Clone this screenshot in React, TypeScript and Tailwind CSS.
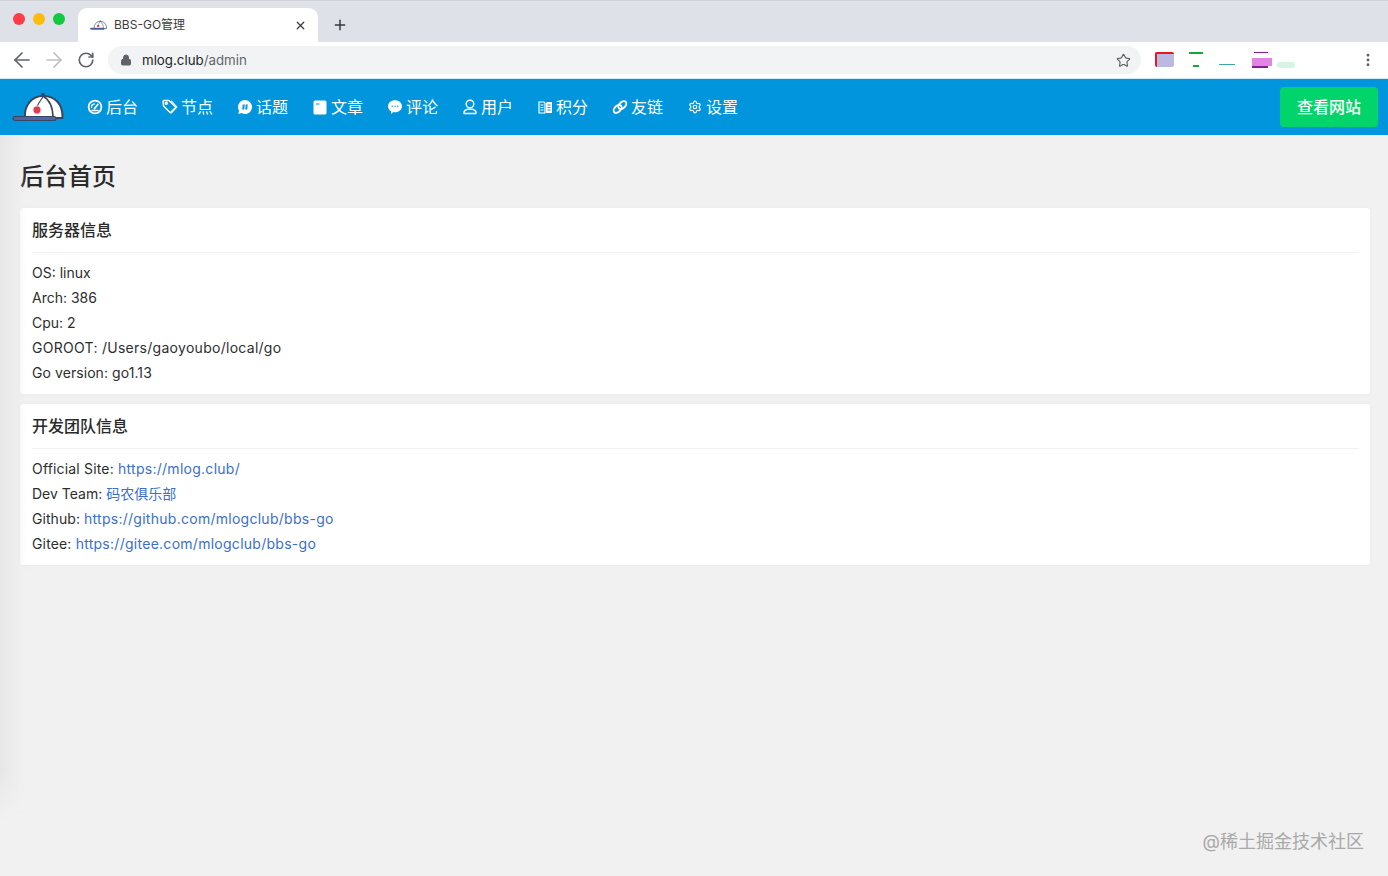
import React from "react";
import { ArrowLeft, ArrowRight, RotateCw, Lock, Star, X, Plus, EllipsisVertical, Settings } from "lucide-react";

const FONT = "font-['Inter','Noto_Sans_CJK_SC',sans-serif]";

function Cap({ w, h }: { w: number; h: number }) {
  return (
    <svg width={w} height={h} viewBox="0 0 52 30" fill="none">
      <path d="M13 26 C12 13 20 4 31 4 C43 4 51 12 50.500 26 Z" fill="#fff" stroke="#3a4560" strokeWidth="2" strokeLinejoin="round" />
      <path d="M31 4 C38 8 41 17 41 26" stroke="#3a4560" strokeWidth="1.600" />
      <path d="M31 5 C28 9 26 12 25 15" stroke="#3a4560" strokeWidth="1.200" />
      <circle cx="31" cy="3" r="2" fill="#3a4560" />
      <circle cx="25" cy="18" r="4.600" fill="#d9dbe2" />
      <circle cx="25" cy="18" r="3.400" fill="#e0394a" />
      <rect x="1" y="24.500" width="43" height="4" rx="2" fill="#4f63a8" stroke="#3a4560" strokeWidth="1.200" />
    </svg>
  );
}

const sw = { fill: "none", stroke: "#fff", strokeLinecap: "round" as const, strokeLinejoin: "round" as const };

function GaugeIcon() {
  return (
    <svg width="16" height="16" viewBox="0 0 16 16" {...sw} strokeWidth="1.800">
      <circle cx="8" cy="8" r="6.400" />
      <path d="M7.500 9.500L10.800 5.500" />
      <path d="M4.500 8.500a3.500 3.500 0 0 1 3-3.700" strokeWidth="1.300" />
      <path d="M5 11.500h6" strokeWidth="1.300" />
    </svg>
  );
}
function TagIcon() {
  return (
    <svg width="16" height="16" viewBox="0 0 16 16" {...sw} strokeWidth="1.400">
      <path d="M1 2.500L1.500 1.500H7L13.800 8.300L8.300 13.800L1.500 7z" />
      <circle cx="4.300" cy="4.300" r="1" />
      <path d="M9.500 2l5.500 6-5.500 6" strokeWidth="1.100" />
    </svg>
  );
}
function BubbleHash() {
  return (
    <svg width="16" height="16" viewBox="0 0 16 16">
      <path d="M8 1a7 7 0 1 1-3.400 13.100L1.200 15l.9-3.200A7 7 0 0 1 8 1z" fill="#fff" />
      <path d="M7 5l-1 6M10 5l-1 6M5 7h6M4.800 9h6" stroke="#0095dc" strokeWidth="1" />
    </svg>
  );
}
function Doc() {
  return (
    <svg width="14" height="15" viewBox="0 0 14 15">
      <rect x="0.500" y="0.500" width="13" height="14" rx="1.500" fill="#fff" />
      <rect x="3" y="3.500" width="3.500" height="1" fill="#0095dc" />
    </svg>
  );
}
function BubbleDots() {
  return (
    <svg width="16" height="16" viewBox="0 0 16 16">
      <path d="M8 1.200c4 0 7 2.600 7 6s-3 6-7 6c-.6 0-1.200 0-1.700-.2L4 15v-2.800C2 11.100 1 9.300 1 7.200c0-3.400 3-6 7-6z" fill="#fff" />
      <circle cx="5.200" cy="7.200" r=".7" fill="#0095dc" />
      <circle cx="8" cy="7.200" r=".7" fill="#0095dc" />
      <circle cx="10.800" cy="7.200" r=".7" fill="#0095dc" />
    </svg>
  );
}
function UserIcon() {
  return (
    <svg width="16" height="16" viewBox="0 0 16 16" {...sw} strokeWidth="1.400">
      <circle cx="8" cy="5" r="3.800" />
      <path d="M2 14.500c-.3-2.500 1.500-3.800 3.800-4.200h4.400c2.300.4 4.100 1.700 3.800 4.200z" />
    </svg>
  );
}
function BookIcon() {
  return (
    <svg width="15" height="15" viewBox="0 0 15 15">
      <path d="M1 2h5l1 1v10H1z" fill="none" stroke="#fff" strokeWidth="1.200" />
      <path d="M8 3l1-1h5v11H8z" fill="#fff" />
      <path d="M2.500 5h3M2.500 7.500h3M2.500 10h3" stroke="#fff" strokeWidth="1" />
      <path d="M9.500 5h3M9.500 7.500h3M9.500 10h3" stroke="#0095dc" strokeWidth="1" />
    </svg>
  );
}
function LinkIcon() {
  return (
    <svg width="17" height="16" viewBox="0 0 17 16" fill="none" stroke="#fff" strokeWidth="2">
      <ellipse cx="6" cy="10" rx="5" ry="3.200" transform="rotate(-45 6 10)" />
      <ellipse cx="11" cy="6" rx="5" ry="3.200" transform="rotate(-45 11 6)" />
    </svg>
  );
}

const navItems: { label: string; icon: React.ReactNode; cls: string }[] = [
  { label: "后台", icon: <GaugeIcon />, cls: "w-[75px]" },
  { label: "节点", icon: <TagIcon />, cls: "w-[75px]" },
  { label: "话题", icon: <BubbleHash />, cls: "w-[75px]" },
  { label: "文章", icon: <Doc />, cls: "w-[75px]" },
  { label: "评论", icon: <BubbleDots />, cls: "w-[75px]" },
  { label: "用户", icon: <UserIcon />, cls: "w-[75px]" },
  { label: "积分", icon: <BookIcon />, cls: "w-[75px]" },
  { label: "友链", icon: <LinkIcon />, cls: "w-[75px]" },
  { label: "设置", icon: <Settings size={14} color="#fff" strokeWidth={2} />, cls: "w-[76px]" },
];

function Card({ title, children }: { title: string; children: React.ReactNode }) {
  return (
    <section className="bg-white rounded-[3px] px-3 shadow-[0_0_6px_rgba(0,0,0,0.03)]">
      <h2 className="h-[45px] flex items-center text-[16px] font-medium text-[#2a2a2a] border-b border-[#f1f1f1]">{title}</h2>
      <div className="pt-[7px] pb-[9px] text-[14px] leading-[25px] text-[#2e2e2e]">{children}</div>
    </section>
  );
}

function A({ children }: { children: React.ReactNode }) {
  return <a className="text-[#3a6fcb] tracking-[0.270px]">{children}</a>;
}

export default function App() {
  return (
    <div className={`relative h-[876px] w-[1388px] overflow-hidden bg-[#f1f1f1] ${FONT}`}>
      {/* tab strip */}
      <div className="h-[42px] bg-[#dee1e7] border-t border-[#d0d2d6] flex items-end">
        <div className="flex items-center gap-2 pl-[13px] h-[40px] pb-[6px]">
          <span className="w-[12px] h-[12px] rounded-full bg-[#fc3d48]" />
          <span className="w-[12px] h-[12px] rounded-full bg-[#fdbb0a]" />
          <span className="w-[12px] h-[12px] rounded-full bg-[#13c93f]" />
        </div>
        <div className="ml-[13px] w-[240px] h-[34px] bg-white rounded-t-[9px] flex items-center pl-[12px] pr-[11px]">
          <Cap w={17} h={10} />
          <span className="ml-[7px] text-[12px] text-[#3c3c3c]">BBS-GO管理</span>
          <X size={13} strokeWidth={2.200} color="#3a3a3a" className="ml-auto" />
        </div>
        <div className="h-[34px] flex items-center ml-[14px]">
          <Plus size={16} strokeWidth={2.200} color="#37393c" />
        </div>
      </div>
      {/* toolbar */}
      <div className="h-[36px] bg-white flex items-center">
        <div className="flex items-center pl-[10px] gap-[8px]">
          <ArrowLeft size={24} strokeWidth={1.700} color="#5f6368" />
          <ArrowRight size={24} strokeWidth={1.700} color="#bdc0c4" />
          <span className="w-[24px] flex justify-center">
            <RotateCw size={18} strokeWidth={2.200} color="#5f6368" />
          </span>
        </div>
        <div className="ml-[10px] w-[1033px] h-[28px] rounded-full bg-[#f1f3f4] flex items-center pl-[12px] pr-[10px]">
          <Lock size={12} fill="#5f6368" color="#5f6368" />
          <span className="ml-[10px] pt-[2px] text-[13.300px] text-[#24262a]">mlog.club<span className="text-[#62666b]">/admin</span></span>
          <Star size={15} strokeWidth={1.800} color="#5a5e63" className="ml-auto" />
        </div>
        <div className="relative flex-1 h-full">
          <div className="absolute left-[14px] top-[10px] w-[19px] h-[15px] rounded-[2px] bg-[#b9b9e2] border-t-2 border-l-2 border-[#e8171f]" />
          <div className="absolute left-[48px] top-[10px] w-[14px] h-[2px] bg-[#17a83a]" />
          <div className="absolute left-[52px] top-[23px] w-[6px] h-[2px] bg-[#17a83a]" />
          <div className="absolute left-[78px] top-[22px] w-[16px] h-[1px] bg-[#3aa9a0]" />
          <div className="absolute left-[111px] top-[16px] w-[20px] h-[8px] bg-[#e284e2]" />
          <div className="absolute left-[111px] top-[24px] w-[16px] h-[2px] bg-[#8a1a9a]" />
          <div className="absolute left-[113px] top-[10px] w-[14px] h-[1px] bg-[#8a1a9a]" />
          <div className="absolute left-[136px] top-[20px] w-[18px] h-[6px] rounded-full bg-[#d5f5e3]" />
          <EllipsisVertical size={16} color="#5f6368" strokeWidth={2.400} className="absolute right-[12px] top-[10px]" />
        </div>
      </div>
      {/* nav */}
      <nav className="h-[57px] bg-[#0095dc] border-t border-[#cfe9f6] flex items-center pl-[12px] pr-[10px]">
        <Cap w={52} h={30} />
        <div className="flex items-center ml-[23px]">
          {navItems.map((n) => (
            <div key={n.label} className={`flex items-center gap-[3px] text-white text-[16px] ${n.cls}`}>
              <span className="w-[16px] flex justify-center">{n.icon}</span>
              <span>{n.label}</span>
            </div>
          ))}
        </div>
        <button className="ml-auto w-[98px] h-[40px] rounded-[4px] bg-[#02d46c] text-white text-[16px] font-medium">查看网站</button>
      </nav>
      {/* content */}
      <main className="pl-[20px] pr-[18px] pt-[26px]">
        <h1 className="text-[24px] leading-[32px] font-medium text-[#2a2a2a] mb-[15px]">后台首页</h1>
        <div className="flex flex-col gap-[10px]">
          <Card title="服务器信息">
            <div>OS: linux</div>
            <div>Arch: 386</div>
            <div>Cpu: 2</div>
            <div className="tracking-[0.280px]">GOROOT: /Users/gaoyoubo/local/go</div>
            <div className="tracking-[0.070px]">Go version: go1.13</div>
          </Card>
          <Card title="开发团队信息">
            <div><span className="tracking-[0.170px]">Official Site: </span><A>https://mlog.club/</A></div>
            <div>Dev Team: <a className="text-[#3a6fcb]">码农俱乐部</a></div>
            <div><span className="tracking-[0.060px]">Github: </span><A>https://github.com/mlogclub/bbs-go</A></div>
            <div><span className="tracking-[0.150px]">Gitee: </span><A>https://gitee.com/mlogclub/bbs-go</A></div>
          </Card>
        </div>
      </main>
      {/* page-edge shade */}
      <div className="absolute left-0 top-[135px] h-[720px] w-[26px] bg-gradient-to-r from-[#e7e7e7] to-transparent pointer-events-none" />
      <div className="absolute left-0 top-[770px] h-[50px] w-[26px] bg-gradient-to-b from-transparent to-[#f1f1f1] pointer-events-none" />
      <div className="absolute left-0 top-[820px] h-[40px] w-[26px] bg-[#f1f1f1] pointer-events-none" />
      {/* watermark */}
      <div className="absolute right-[24px] top-[830px] text-[18px] leading-[24px] text-[#a9a9a9]">@稀土掘金技术社区</div>
    </div>
  );
}
